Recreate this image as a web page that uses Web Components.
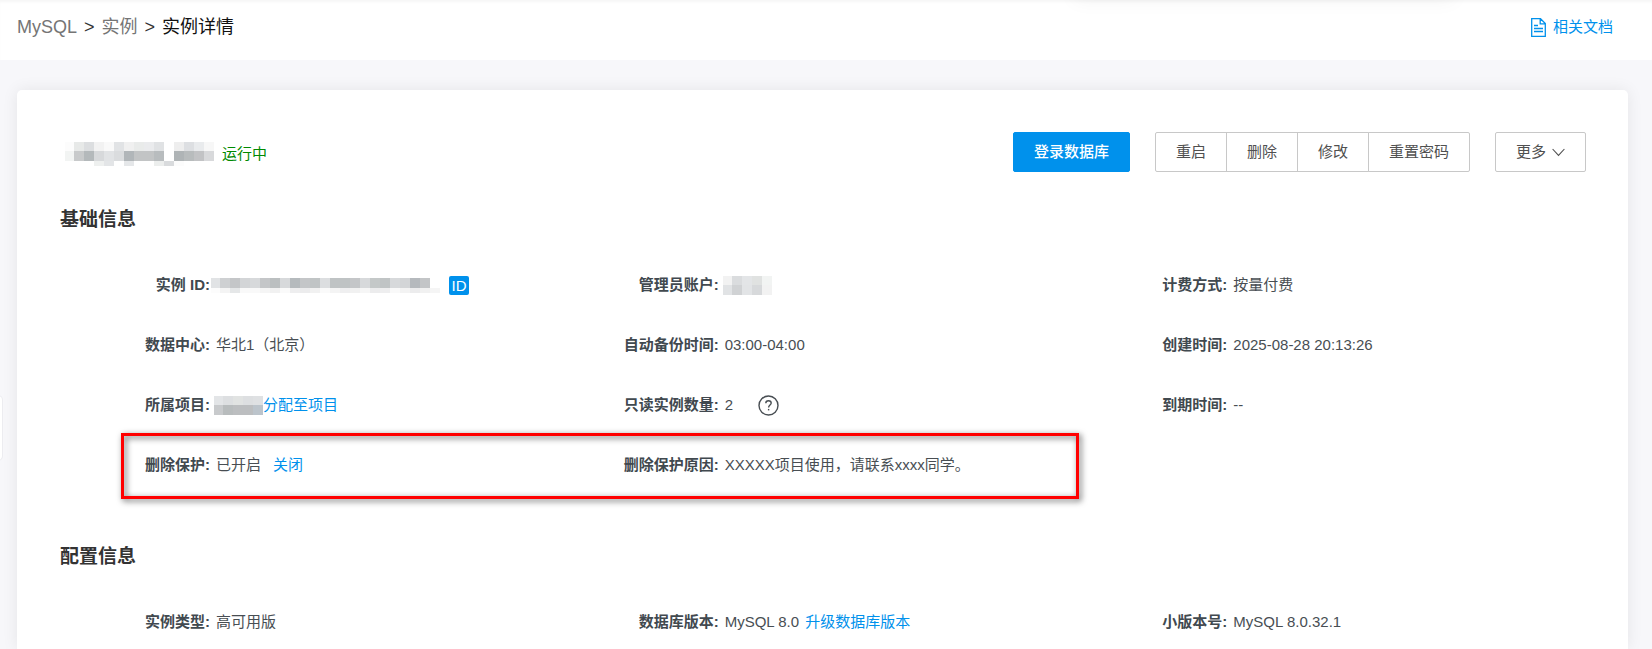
<!DOCTYPE html>
<html lang="zh-CN">
<head>
<meta charset="utf-8">
<title>实例详情</title>
<style>
  html, body { margin: 0; }
  body {
    --blue: #0091ec;
    --page: #f7f7fa;
    background: var(--page);
    color: #484e53;
    font: 15px/24px "Liberation Sans", "Noto Sans CJK SC", sans-serif;
  }
</style>
</head>
<body>
<instance-page></instance-page>

<script>
const define = (name, markup, setup) => {
  const template = document.createElement('template');
  template.innerHTML = markup;
  customElements.define(name, class extends HTMLElement {
    constructor() {
      super();
      this.attachShadow({ mode: 'open' }).append(template.content.cloneNode(true));
    }
    connectedCallback() {
      if (setup) setup(this, this.shadowRoot);
    }
  });
};

/* Masked value: rows of grey tiles, "height:shade,shade,..." separated by ";" */
define('masked-value', `
  <style>
    :host { display: block; flex: none; }
    svg { display: block; }
  </style>
  <svg aria-hidden="true" shape-rendering="crispEdges"></svg>
`, (host, root) => {
  let y = 0, width = 0, tiles = '';
  for (const row of host.getAttribute('tiles').split(';')) {
    const [height, shades] = row.split(':');
    let x = 0;
    for (const shade of shades.split(',')) {
      const w = x === 0 ? 9 : 10;
      if (shade) tiles += `<rect x="${x}" y="${y}" width="${w}" height="${height}" fill="#${shade}"/>`;
      x += w;
    }
    width = Math.max(width, x);
    y += Number(height);
  }
  const svg = root.querySelector('svg');
  svg.setAttribute('width', width);
  svg.setAttribute('height', y);
  svg.innerHTML = tiles;
});

define('text-link', `
  <style>
    :host { display: inline-block; }
    a { display: flex; align-items: center; gap: 7px; color: var(--blue); text-decoration: none; }
  </style>
  <a href="#"><slot name="icon"></slot><span><slot></slot></span></a>
`);

define('page-header', `
  <style>
    :host {
      display: flex; align-items: center; justify-content: space-between;
      box-sizing: border-box; height: 60px; padding: 0 39px 6px 17px;
      background: #fff; box-shadow: inset 0 3px 3px -1px rgba(0,0,0,.04);
      position: relative; overflow: hidden;
    }
    :host::before {
      content: ""; position: absolute; top: -20px; left: 65%; right: 12%; height: 20px;
      box-shadow: 0 0 20px rgba(0,0,0,.05);
    }
    nav { display: flex; gap: 7px; font-size: 18px; color: #333; }
    nav a { color: #757575; text-decoration: none; }
    nav b { font-weight: normal; color: #111; }
    svg { display: block; }
  </style>
  <nav aria-label="面包屑">
    <a href="#">MySQL</a><span>&gt;</span><a href="#">实例</a><span>&gt;</span><b aria-current="page">实例详情</b>
  </nav>
  <text-link>
    <svg slot="icon" width="15" height="19" viewBox="0 0 15 19" fill="none" stroke="currentColor" stroke-width="1.3">
      <path d="M.7.7h8.8l4.8 4.8v12.8H.7zM9.2.7v5.1h5.1M3 7.5h4M3 10.5h9M3 13.5h9"/>
    </svg>相关文档
  </text-link>
`);

define('action-button', `
  <style>
    :host { display: block; }
    button {
      display: flex; align-items: center; gap: 6px; height: 40px; padding: 0 20px;
      border: 1px solid #c8c8c8; border-radius: var(--corners, 2px);
      background: #fff; color: #505050; font: inherit; white-space: nowrap; cursor: pointer;
    }
    :host([primary]) button { background: var(--blue); border-color: var(--blue); color: #fff; font-weight: 500; }
  </style>
  <button type="button"><slot></slot></button>
`);

define('button-group', `
  <style>
    :host { display: flex; }
    ::slotted(*) { --corners: 0; }
    ::slotted(:not(:first-child)) { margin-left: -1px; }
    ::slotted(:first-child) { --corners: 2px 0 0 2px; }
    ::slotted(:last-child) { --corners: 0 2px 2px 0; }
  </style>
  <slot></slot>
`);

define('instance-head', `
  <style>
    :host { display: flex; align-items: center; justify-content: space-between; gap: 24px; }
    .name { display: flex; align-items: center; gap: 8px; padding: 3px 0 0 5px; }
    .status { color: #008a00; }
    .actions { display: flex; gap: 25px; }
    svg { display: block; }
  </style>
  <div class="name">
    <masked-value tiles="9:fcfcfc,e7e9e8,dcdee0,f2f2f2,f9f9f9,e1e3e5,f0f0f0,e9ebea,eaebed,e0e2e4,,eeeeee,dddfe2,e9ebed,f7f7f7;10:f2f4f3,c8cacb,b4b9bb,d7d9db,e1e3e5,dadcde,b1b6b9,c2c4c5,c2c4c5,b8bcbe,,afb4b6,b8bcbd,c2c3c5,d8d9db;5:,,,eef0ef,e3e5e7,,e5e7e9,,,eceeed,d9dbdd,fcfcfc"></masked-value>
    <span class="status">运行中</span>
  </div>
  <div class="actions">
    <action-button primary>登录数据库</action-button>
    <button-group>
      <action-button>重启</action-button>
      <action-button>删除</action-button>
      <action-button>修改</action-button>
      <action-button>重置密码</action-button>
    </button-group>
    <action-button>更多<svg width="13" height="9" viewBox="0 0 13 9" fill="none" stroke="currentColor" stroke-width="1.1"><path d="M.6 1l5.9 6.4L12.400 1"/></svg></action-button>
  </div>
`);

define('info-section', `
  <style>
    :host { display: block; }
    h2 { margin: 0 0 39px; font-size: 19px; line-height: 28px; color: #333; }
    .grid { display: grid; grid-template-columns: repeat(3, 1fr); gap: 36px 0; }
  </style>
  <h2></h2>
  <div class="grid"><slot></slot></div>
`, (host, root) => { root.querySelector('h2').textContent = host.getAttribute('heading'); });

define('info-item', `
  <style>
    :host { display: flex; height: 24px; white-space: nowrap; }
    .label { flex: none; width: 150px; text-align: right; font-weight: bold; color: #41494f; }
    .value { display: flex; align-items: center; padding-left: var(--value-gap, 6px); }
  </style>
  <span class="label"></span>
  <div class="value"><slot></slot></div>
`, (host, root) => { root.querySelector('.label').textContent = host.getAttribute('label') + ':'; });

define('id-badge', `
  <style>
    :host { display: block; }
    button {
      display: block; width: 20px; height: 19px; padding: 0; border: 0; border-radius: 2px;
      background: var(--blue); color: #fff; font: inherit; line-height: 19px; text-align: center; cursor: pointer;
    }
  </style>
  <button type="button">ID</button>
`);

define('help-icon', `
  <style>
    :host { display: block; }
    button { display: block; padding: 0; border: 0; background: none; color: inherit; cursor: pointer; }
    svg { display: block; }
  </style>
  <button type="button" aria-label="帮助">
    <svg width="21" height="21" viewBox="0 0 21 21" fill="none" stroke="currentColor" stroke-width="1.4">
      <circle cx="10.500" cy="10.500" r="9.500"/>
      <path d="M7.800 8.300C7.800 6.600 9 5.700 10.500 5.700s2.700.9 2.700 2.400c0 1.900-2.600 2.100-2.600 4.400"/>
      <path d="M10.600 13.900v1.500"/>
    </svg>
  </button>
`);

define('instance-page', `
  <style>
    :host { display: flex; flex-direction: column; min-height: 100vh; position: relative; overflow: hidden; }
    main {
      flex: 1; margin: 30px 24px 0 17px; padding: 42px 42px 12px 43px;
      background: #fff; border-radius: 5px 5px 0 0; box-shadow: 0 0 16px rgba(0,0,0,.08);
    }
    info-section { margin-top: 34px; }
    info-section + info-section { margin-top: 66px; }
    .flush { --value-gap: 1px; }
    .near { --value-gap: 4px; }
    id-badge { margin-left: 9px; }
    help-icon { margin-left: 25px; }
    .after { margin-left: 12px; }
    .next { margin-left: 6px; }
    /* Frame round the deletion-protection row, stacked in the same grid cells */
    .frame {
      grid-area: 4 / 1 / 5 / 3; margin: -20px -2px -22px 61px; border: 3px solid #f00;
      filter: drop-shadow(2px 2px 3px rgba(0,0,0,.65)); pointer-events: none;
    }
    .r4c1 { grid-area: 4 / 1; }
    .r4c2 { grid-area: 4 / 2; }
    .drawer {
      position: absolute; left: -7px; top: 395px; width: 10px; height: 66px;
      border: 1px solid #ececf0; border-left: 0; border-radius: 0 5px 5px 0; box-sizing: border-box; background: #fff;
    }
  </style>
  <page-header></page-header>
  <main>
    <instance-head></instance-head>
    <info-section heading="基础信息">
      <info-item class="flush" label="实例 ID"><masked-value tiles="10:e1e3e5,ced0d2,c4c6c8,d3d5d7,d7d9db,c4c6c8,bbbfc0,d7d9db,b5babd,c4c6c8,c0c4c5,dcdee0,bfc3c4,bfc3c4,c4c6c8,d7d9db,c4c8c8,c0c4c5,d7d9db,d3d5d7,b5b9bd,c3c5c7;5:fcfcfc,f4f4f4,e5e7e8,f9f9f9,f9f9f9,f5f5f5,f1f1f1,fafafa,eeeeef,ececed,f1f1f1,fafafa,f4f4f4,efeff0,f1f1f1,f6f6f6,ececed,eeeeef,f9f9f9,f3f3f3,ececed,f1f1f1,f5f5f5"></masked-value><id-badge></id-badge></info-item>
      <info-item class="near" label="管理员账户"><masked-value tiles="9:f2f2f2,dadcde,e3e5e7,e0e2e1,f2f4f3;10:e1e3e5,d0d2d4,e2e4e6,d7d9db,f2f2f2"></masked-value></info-item>
      <info-item label="计费方式">按量付费</info-item>
      <info-item label="数据中心">华北1（北京）</info-item>
      <info-item label="自动备份时间">03:00-04:00</info-item>
      <info-item label="创建时间">2025-08-28 20:13:26</info-item>
      <info-item class="near" label="所属项目"><masked-value tiles="9:e3e5e7,dddfe1,e1e3e2,dddfe1,dfe1e3;10:c8cacc,b8bcbd,bcbec0,bcbec0,bcc4cb"></masked-value><text-link>分配至项目</text-link></info-item>
      <info-item label="只读实例数量">2<help-icon></help-icon></info-item>
      <info-item label="到期时间">--</info-item>
      <info-item class="r4c1" label="删除保护">已开启<text-link class="after">关闭</text-link></info-item>
      <info-item class="r4c2" label="删除保护原因">XXXXX项目使用，请联系xxxx同学。</info-item>
      <div class="frame"></div>
    </info-section>
    <info-section heading="配置信息">
      <info-item label="实例类型">高可用版</info-item>
      <info-item label="数据库版本">MySQL 8.0<text-link class="next">升级数据库版本</text-link></info-item>
      <info-item label="小版本号">MySQL 8.0.32.1</info-item>
    </info-section>
  </main>
  <div class="drawer"></div>
`);
</script>
</body>
</html>
